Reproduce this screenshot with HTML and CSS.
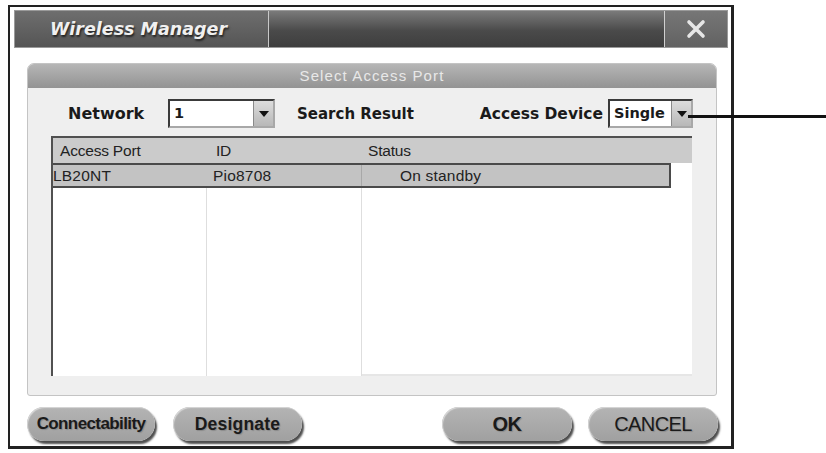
FILE: index.html
```html
<!DOCTYPE html>
<html lang="en">
<head>
  <meta charset="UTF-8">
  <meta name="viewport" content="width=device-width, initial-scale=1.0">
  <title>Wireless Manager</title>
  <link rel="stylesheet" href="styles.css">
</head>
<body>
  <div class="page">
    <div class="window">
      <div class="titlebar">
        <div class="title-name">Wireless Manager</div>
        <div class="title-fill"></div>
        <div class="title-close">
          <svg width="20" height="20" viewBox="0 0 20 20">
            <path d="M3 3 L17 17 M17 3 L3 17" stroke="#e6e6e6" stroke-width="3.6" stroke-linecap="round"/>
          </svg>
        </div>
      </div>

      <div class="panel">
        <div class="panel-head">Select Access Port</div>

        <div class="controls">
          <span class="label label-network">Network</span>
          <div class="select select-network">
            <span class="select-value">1</span>
            <span class="select-btn"><i class="tri"></i></span>
          </div>
          <span class="label label-search">Search Result</span>
          <span class="label label-device">Access Device</span>
          <div class="select select-device">
            <span class="select-value">Single</span>
            <span class="select-btn"><i class="tri"></i></span>
          </div>
        </div>

        <div class="list">
          <div class="list-head">
            <span class="c1">Access Port</span>
            <span class="c2">ID</span>
            <span class="c3">Status</span>
          </div>
          <div class="list-row">
            <span class="c1">LB20NT</span>
            <span class="c2">Pio8708</span>
            <span class="c3">On standby</span>
          </div>
          <div class="list-body">
            <span class="col"></span>
            <span class="col"></span>
            <span class="col last"></span>
          </div>
        </div>
      </div>

      <div class="actions">
        <button class="pill w-conn">Connectability</button>
        <button class="pill w-desig">Designate</button>
        <span class="spacer"></span>
        <button class="pill w-ok">OK</button>
        <button class="pill w-cancel">CANCEL</button>
      </div>
    </div>

    <!-- callout line pointing at the Access Device box -->
    <div class="callout"></div>
  </div>
</body>
</html>
```

FILE: styles.css
```css
* {
  box-sizing: border-box;
}

body {
  margin: 0;
  background: #fff;
  font-family: "DejaVu Sans", Arial, sans-serif;
  color: #1a1a1a;
}

.page {
  position: relative;
  width: 826px;
  height: 453px;
  padding: 5px 0 0 8px;
}

.window {
  width: 726px;
  height: 444px;
  border: 2px solid #222;
  border-right-width: 3px;
  border-bottom-width: 3px;
  background: #fff;
  padding: 3px 3px 0 4px;
  display: flex;
  flex-direction: column;
}

/* title bar */
.titlebar {
  display: flex;
  height: 38px;
  border: 1px solid #9a9a9a;
}

.title-name {
  width: 254px;
  background: linear-gradient(#6e6e6e, #555);
  border-right: 1px solid #c8c8c8;
  color: #f0f0f0;
  font-weight: bold;
  font-style: italic;
  font-size: 17.5px;
  line-height: 36px;
  padding-left: 35px;
  text-shadow: 1px 2px 2px #222;
}

.title-fill {
  flex: 1;
  background: linear-gradient(#7a7a7a, #4a4a4a 55%, #3e3e3e);
}

.title-close {
  width: 63px;
  background: linear-gradient(#767676, #626262);
  border-left: 1px solid #d0d0d0;
  display: flex;
  align-items: center;
  justify-content: center;
}

/* main panel */
.panel {
  margin: 15px 11px 0 13px;
  height: 333px;
  border: 1px solid #c4c4c4;
  border-radius: 7px 7px 3px 3px;
  background: #efefef;
  display: flex;
  flex-direction: column;
  overflow: hidden;
}

.panel-head {
  height: 24px;
  background: linear-gradient(#b6b6b6, #939393);
  color: #e8e8e8;
  font-family: "Liberation Sans", Arial, sans-serif;
  font-size: 15px;
  letter-spacing: 1.1px;
  text-align: center;
  line-height: 23px;
}

.controls {
  display: flex;
  align-items: center;
  height: 29px;
  margin-top: 11px;
  padding: 0 23px 0 40px;
}

.label {
  font-weight: bold;
  font-size: 15.5px;
  color: #1a1a1a;
}

.label-network {
  width: 100px;
  font-size: 16px;
}

.label-search {
  margin-left: 22px;
  font-size: 15px;
}

.label-device {
  margin-left: auto;
  font-size: 15.5px;
}

.select {
  display: flex;
  height: 29px;
  background: #fff;
  border: 2px solid;
  border-color: #3a3a3a #a8a8a8 #a8a8a8 #3a3a3a;
}

.select-network {
  width: 107px;
}

.select-device {
  width: 85px;
  margin-left: 5px;
}

.select-value {
  flex: 1;
  font-weight: bold;
  font-size: 14.5px;
  line-height: 25px;
  padding-left: 4px;
}

.select-btn {
  width: 20px;
  background: linear-gradient(#dcdcdc, #b8b8b8);
  border-left: 1px solid #8a8a8a;
  display: flex;
  align-items: center;
  justify-content: center;
}

.tri {
  width: 0;
  height: 0;
  border-left: 5px solid transparent;
  border-right: 5px solid transparent;
  border-top: 6px solid #111;
}

/* result list */
.list {
  margin: 8px 24px 0 23px;
  height: 240px;
  background: #fff;
  border-top: 2px solid #505050;
  border-left: 2px solid #505050;
  display: flex;
  flex-direction: column;
  font-family: "Liberation Sans", Arial, sans-serif;
  font-size: 15.5px;
  color: #222;
}

.list-head,
.list-row {
  display: grid;
  grid-template-columns: 154px 155px 1fr;
}

.list-head {
  height: 25px;
  line-height: 25px;
  background: #cbcbcb;
  letter-spacing: -0.2px;
}

.list-head .c1 {
  padding-left: 7px;
}

.list-head .c2 {
  padding-left: 9px;
}

.list-head .c3 {
  padding-left: 6px;
}

.list-row {
  width: 618px;
  height: 25px;
  line-height: 21px;
  background: #c3c3c3;
  border-top: 2px solid #4a4a4a;
  border-bottom: 2px solid #4a4a4a;
  border-right: 2px solid #4a4a4a;
  letter-spacing: 0.2px;
}

.list-row .c2 {
  padding-left: 6px;
  border-right: 1px solid #a8a8a8;
}

.list-row .c3 {
  padding-left: 38px;
}

.list-body {
  flex: 1;
  display: grid;
  grid-template-columns: 154px 155px 1fr;
}

.col {
  border-right: 1px solid #dedede;
}

.col.last {
  border-right: none;
  border-bottom: 2px solid #e6e6e6;
}

/* bottom buttons */
.actions {
  display: flex;
  align-items: center;
  margin: 10px 10px 0 13px;
  height: 36px;
}

.spacer {
  flex: 1;
}

.pill {
  height: 34px;
  border: none;
  border-radius: 17px;
  background: linear-gradient(#b4b4b4, #a0a0a0);
  box-shadow: 2px 3px 2px #4e4e4e, inset 1px 1px 1px #d8d8d8;
  font-family: "Liberation Sans", Arial, sans-serif;
  font-weight: bold;
  color: #1a1a1a;
  text-shadow: 1px 1px 1px #8a8a8a;
  padding: 0;
}

.w-conn {
  width: 128px;
  font-size: 17px;
  letter-spacing: -0.6px;
}

.w-desig {
  width: 129px;
  margin-left: 18px;
  font-size: 17.5px;
  letter-spacing: 0.2px;
}

.w-ok {
  width: 130px;
  font-size: 20px;
  letter-spacing: -0.5px;
}

.w-cancel {
  width: 130px;
  margin-left: 16px;
  font-size: 20px;
  font-weight: normal;
  letter-spacing: -0.6px;
}

.callout {
  position: absolute;
  left: 688px;
  top: 115px;
  width: 138px;
  height: 3px;
  background: #111;
}
```
